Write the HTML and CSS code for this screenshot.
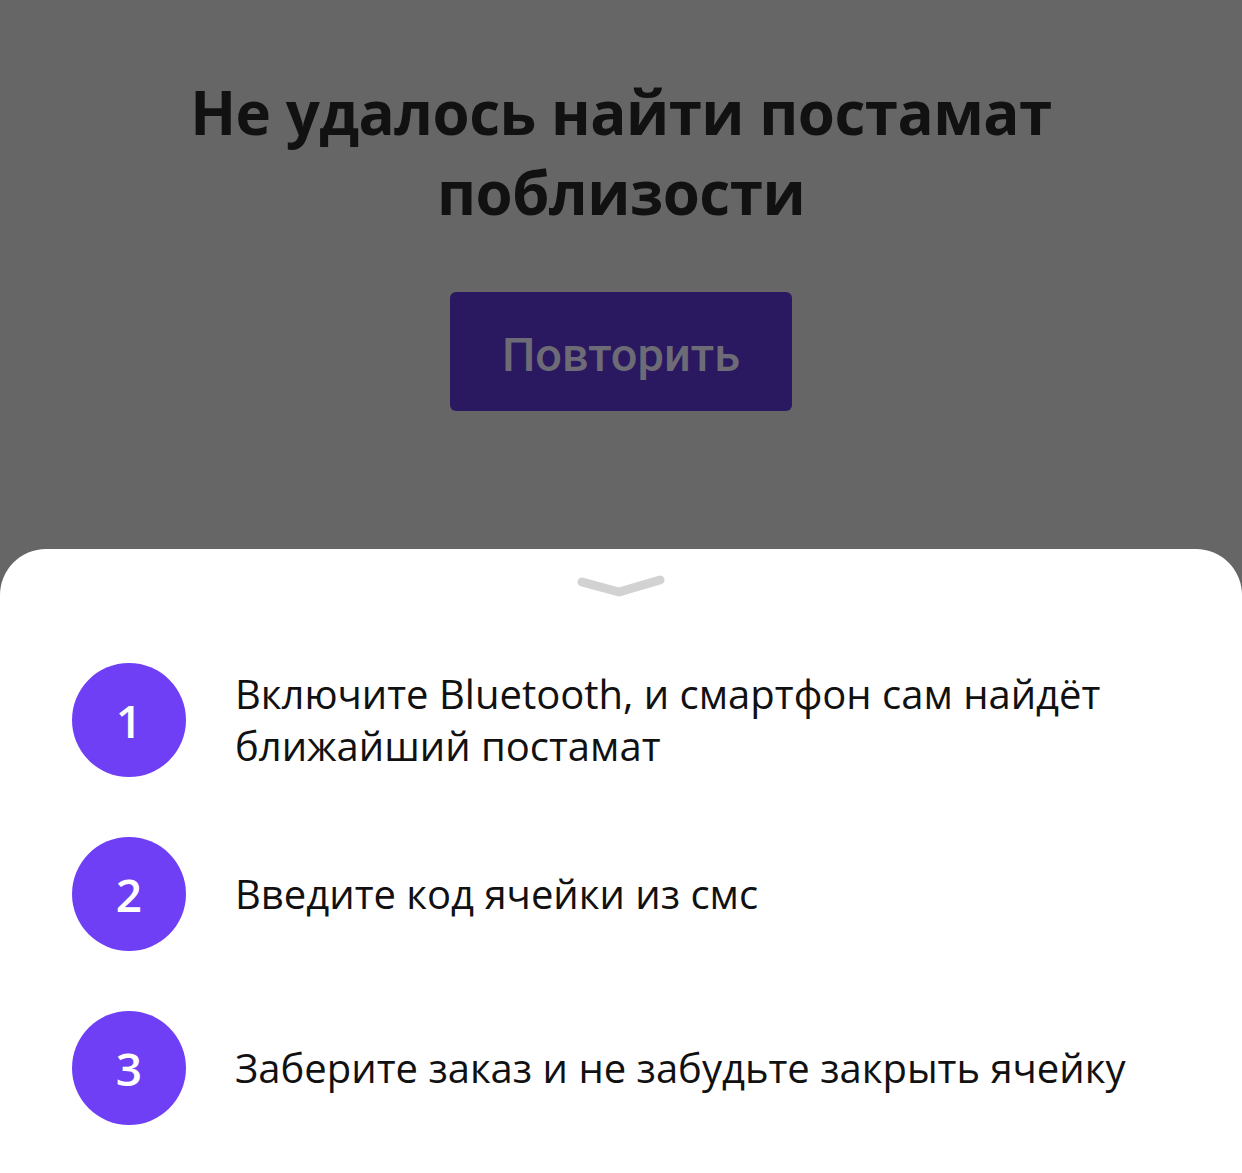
FILE: index.html
```html
<!doctype html>
<html>
<head>
	<meta charset="utf-8">
	<title>Постамат</title>
	<link rel="stylesheet" href="styles.css">
</head>
<body>
	<!-- экран ошибки под затемнением -->
	<div class="screen">
		<h1 class="title">Не удалось найти постамат поблизости</h1>
		<button class="retry">Повторить</button>
	</div>

	<!-- нижняя шторка с подсказками -->
	<div class="sheet">
		<div class="handle">
			<svg width="96" height="30" viewBox="0 0 96 30">
				<path d="M8 11 L45 21 L86 9" fill="none" stroke="#d2d2d2" stroke-width="9" stroke-linecap="round" stroke-linejoin="round"/>
			</svg>
		</div>
		<ol class="steps">
			<li class="step">
				<span class="num">1</span>
				<p>Включите Bluetooth, и смартфон сам найдёт ближайший постамат</p>
			</li>
			<li class="step">
				<span class="num">2</span>
				<p>Введите код ячейки из смс</p>
			</li>
			<li class="step">
				<span class="num">3</span>
				<p>Заберите заказ и не забудьте закрыть ячейку</p>
			</li>
		</ol>
	</div>
</body>
</html>
```

FILE: styles.css
```css
html,body{margin:0;padding:0;}
body{
	width:1242px;
	height:1173px;
	background-color:#666666;
	font-family:"Open Sans","Noto Sans",sans-serif;
	display:flex;
	flex-direction:column;
	overflow:hidden;
}
/* верхняя часть */
.screen{
	height:549px;
	display:flex;
	flex-direction:column;
	align-items:center;
	box-sizing:border-box;
	padding-top:72px;
}
.title{
	margin:0;
	width:900px;
	text-align:center;
	font-size:60px;
	line-height:80px;
	font-weight:700;
	color:#111111;
	letter-spacing:-0.5px;
}
.retry{
	margin-top:60px;
	width:342px;
	height:119px;
	padding:6px 0 0;
	border:none;
	border-radius:6px;
	background-color:#2a1960;
	color:#6d6b75;
	font-family:Roboto,"Noto Sans",sans-serif;
	font-size:47px;
	font-weight:500;
}
/* шторка */
.sheet{
	flex:1;
	background-color:#fff;
	border-radius:46px 46px 0 0;
	padding-top:22px;
}
.handle{
	display:flex;
	justify-content:center;
	padding-left:2px;
}
.steps{
	margin:62px 0 0;
	padding:0 0 0 72px;
	list-style:none;
	display:flex;
	flex-direction:column;
	gap:60px;
}
.step{
	display:flex;
	align-items:center;
	gap:49px;
	min-height:114px;
}
.num{
	flex:none;
	width:114px;
	height:114px;
	border-radius:50%;
	background-color:#6e3ff5;
	color:#fff;
	font-size:46px;
	font-weight:600;
	display:flex;
	align-items:center;
	justify-content:center;
}
.step p{
	margin:0;
	width:920px;
	font-size:40px;
	line-height:52px;
	color:#111;
}
```
